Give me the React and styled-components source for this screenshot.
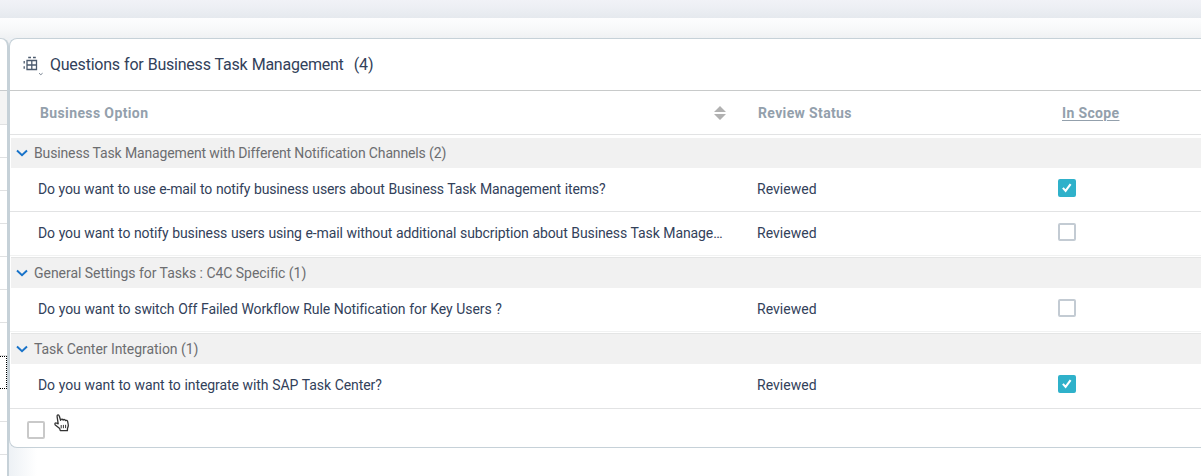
import React from "react";
import styled, { createGlobalStyle, css } from "styled-components";

const GlobalStyle = createGlobalStyle`
  * { box-sizing: border-box; }
  body {
    margin: 0;
    overflow: hidden;
    background: #fff;
    color: #32415a;
    font-family: Roboto, "Liberation Sans", sans-serif;
    font-size: 14px;
  }
`;

const Page = styled.div`
  width: 1201px;
  height: 476px;
  display: flex;
  flex-direction: column;
  overflow: hidden;
`;

const TopBar = styled.div`
  flex: none;
  height: 18px;
  background: linear-gradient(#f1f2f7, #edeff4 40%, #e5e9ee);
`;

const Shade = styled.div`
  flex: none;
  height: 20px;
  background: linear-gradient(#fdfdfe, #f8f9fa 50%, #eff1f3);
`;

const Workspace = styled.div`
  flex: 1;
  min-height: 0;
  display: flex;
  background: linear-gradient(#eff1f3, #eff1f3 14px, transparent 14px);
`;

const SidePanel = styled.aside`
  flex: none;
  width: 9px;
  height: 438px;
  border-top: 1px solid #c9d3da;
  border-right: 2px solid #c6d1d8;
  border-top-right-radius: 8px;
  background: #fff;
`;

const SideTitle = styled.div`
  height: 52px;
  border-bottom: 1px solid #c8cbcd;
`;

const SideRow = styled.div`
  height: 33px;
  border-bottom: 1px solid #e0e1e2;
  ${(p) => p.$header && css`height: 34px; background: #f4f4f4;`}
  ${(p) => p.$focused && css`border: 1px dotted #000; border-left: 0;`}
`;

const Main = styled.main`
  flex: 1;
  min-width: 0;
  background: linear-gradient(90deg, #edf1f5, #fff 28px);
`;

const Card = styled.section`
  height: 410px;
  border: 1px solid #c6d1d8;
  border-right: 0;
  border-radius: 8px 0 0 8px;
  background: #fff;
  overflow: hidden;
`;

const CardTitle = styled.header`
  height: 52px;
  display: flex;
  align-items: center;
  padding-left: 13px;
  border-bottom: 1px solid #c8caca;
`;

const GridIcon = styled.svg`
  width: 22px;
  height: 22px;
  flex: none;
  margin: 3px 5px 0 0;
`;

const Title = styled.h1`
  margin: 0;
  font-size: 16px;
  font-weight: 400;
  letter-spacing: ${(p) => p.$spacing || 0}px;
  word-spacing: 0.5px;
  white-space: nowrap;
`;

const Count = styled.span`
  margin-left: 10px;
  font-size: 16px;
`;

const columns = css`
  display: grid;
  grid-template-columns: 732px 304px 1fr;
  align-items: center;
`;

const HeaderRow = styled.div`
  ${columns}
  height: 44px;
  border-bottom: 1px solid #e2e3e4;
  color: #93a0ac;
  font-weight: 700;
`;

const HeaderCell = styled.div`
  display: flex;
  align-items: center;
  justify-content: space-between;
  padding: 0 ${(p) => p.$right || 0}px 0 ${(p) => p.$left}px;
  letter-spacing: ${(p) => p.$spacing || 0}px;
`;

const Underlined = styled.span`
  text-decoration: underline;
  text-underline-offset: 2px;
  text-decoration-thickness: 1px;
`;

const SortIcon = styled.svg`
  width: 12px;
  height: 14px;
`;

const GroupRow = styled.div`
  height: 30px;
  display: flex;
  align-items: center;
  gap: 6px;
  margin: ${(p) => (p.$first ? 3 : 2)}px 0 0 1px;
  padding-left: 5px;
  background: #f1f1f1;
  color: #6c6d70;
  letter-spacing: ${(p) => p.$spacing}px;
  ${(p) => !p.$first && css`box-shadow: 0 -1px #e4e5e5;`}
`;

const Chevron = styled.svg`
  width: 12px;
  height: 8px;
`;

const ItemRow = styled.div`
  ${columns}
  height: ${(p) => (p.$last ? 45 : 44)}px;
  padding-bottom: ${(p) => (p.$last ? 3 : 2)}px;
  border-bottom: 1px solid ${(p) => (p.$faint ? "#f1f2f2" : "#e2e3e4")};
`;

const OptionText = styled.div`
  padding-left: 28px;
  white-space: nowrap;
  letter-spacing: ${(p) => p.$spacing}px;
  word-spacing: 0.4px;
`;

const StatusText = styled.div`
  padding-left: 15px;
  letter-spacing: 0.04px;
`;

const CheckBox = styled.span`
  width: 18px;
  height: 18px;
  display: grid;
  place-items: center;
  margin: -2px 0 0 12px;
  border: 2px solid ${(p) => (p.$checked ? "#2fb1ca" : p.$neutral ? "#c9c9c9" : "#c3cbd3")};
  border-radius: 2px;
  background: ${(p) => (p.$checked ? "#2fb1ca" : "#fff")};
`;

const Footer = styled.footer`
  height: 38px;
  display: flex;
  align-items: center;
  padding: 5px 0 0 5px;
`;

const Cursor = styled.svg`
  position: absolute;
  left: 53px;
  top: 413px;
  width: 18px;
  height: 20px;
`;

const groups = [
  {
    label: "Business Task Management with Different Notification Channels (2)",
    spacing: -0.14,
    items: [
      { text: "Do you want to use e-mail to notify business users about Business Task Management items?", spacing: -0.147, checked: true },
      { text: "Do you want to notify business users using e-mail without additional subcription about Business Task Manage…", spacing: -0.117, checked: false },
    ],
  },
  {
    label: "General Settings for Tasks : C4C Specific (1)",
    spacing: -0.04,
    items: [{ text: "Do you want to switch Off Failed Workflow Rule Notification for Key Users ?", spacing: -0.1, checked: false }],
  },
  {
    label: "Task Center Integration (1)",
    spacing: -0.05,
    items: [{ text: "Do you want to want to integrate with SAP Task Center?", spacing: -0.084, checked: true }],
  },
];

function Tick() {
  return (
    <svg width="12" height="12" viewBox="0 0 12 12">
      <path d="M1.9 5.9 4.6 8.9 9.6 2.2" fill="none" stroke="#fff" strokeWidth="2.1" />
    </svg>
  );
}

export default function App() {
  return (
    <Page>
      <GlobalStyle />
      <TopBar />
      <Shade />
      <Workspace>
        <SidePanel>
          <SideTitle />
          <SideRow $header />
          {[0, 1, 2, 3, 4, 5, 6, 7, 8, 9].map((n) => (
            <SideRow key={n} $focused={n === 7} />
          ))}
        </SidePanel>
        <Main>
          <Card>
            <CardTitle>
              <GridIcon viewBox="0 0 22 22" fill="none" stroke="#4b5a6d">
                <path d="M4 5.5h9.5v9H4zM8.8 5.5v9M4 10h9.5" strokeWidth="1.3" />
                <path d="M5.2 2.5h2.8M10 2.5h2.8M1.2 6v2.4M1.2 11.3v2.4" strokeWidth="1.3" />
                <path d="M16 18.2l1.8 1.5 1.8-1.5" stroke="#778391" />
              </GridIcon>
              <Title $spacing={-0.23}>Questions for Business Task Management</Title>
              <Count>(4)</Count>
            </CardTitle>
            <HeaderRow>
              <HeaderCell $left={30} $right={16} $spacing={0.38}>
                Business Option
                <SortIcon viewBox="0 0 12 14" fill="#b1b1b1">
                  <path d="M0 6 6 0l6 6zM0 8h12l-6 6z" />
                </SortIcon>
              </HeaderCell>
              <HeaderCell $left={16} $spacing={0.36}>Review Status</HeaderCell>
              <HeaderCell $left={16} $spacing={0.35}><Underlined>In Scope</Underlined></HeaderCell>
            </HeaderRow>
            {groups.map((group, g) => (
              <React.Fragment key={group.label}>
                <GroupRow $first={g === 0} $spacing={group.spacing}>
                  <Chevron viewBox="0 0 12 8" fill="none" stroke="#1873c9" strokeWidth="1.9">
                    <path d="M1 1.5 6 6.3l5-4.8" />
                  </Chevron>
                  <span>{group.label}</span>
                </GroupRow>
                {group.items.map((item, i) => (
                  <ItemRow
                    key={item.text}
                    $faint={g < groups.length - 1 && i === group.items.length - 1}
                    $last={g === groups.length - 1}
                  >
                    <OptionText $spacing={item.spacing}>{item.text}</OptionText>
                    <StatusText>Reviewed</StatusText>
                    <CheckBox $checked={item.checked}>{item.checked && <Tick />}</CheckBox>
                  </ItemRow>
                ))}
              </React.Fragment>
            ))}
            <Footer>
              <CheckBox $neutral />
            </Footer>
          </Card>
        </Main>
      </Workspace>
      <Cursor viewBox="0 0 18 20">
        <path
          d="M5.2 10.8 4.1 3.6C3.8 1.5 5.8 1.2 6.3 3l1.3 4.3c.3-1.6 2.2-1.5 2.5-.2.7-1 2.1-.7 2.4.5.8-.7 2-.1 2.2 1l.6 3.4c.2 1.2-.5 2.3-.8 3.4l-.1 2.2H7.3l-.6-2L2.3 12c-1.1-1.4.1-2.6 1.5-1.8z"
          fill="#fff" stroke="#333" strokeWidth="1.3" strokeLinejoin="round"
        />
        <path d="M8.2 12v3.3M10.4 11.9v3.3M12.6 11.8v3.3" stroke="#333" strokeWidth="1" />
      </Cursor>
    </Page>
  );
}
